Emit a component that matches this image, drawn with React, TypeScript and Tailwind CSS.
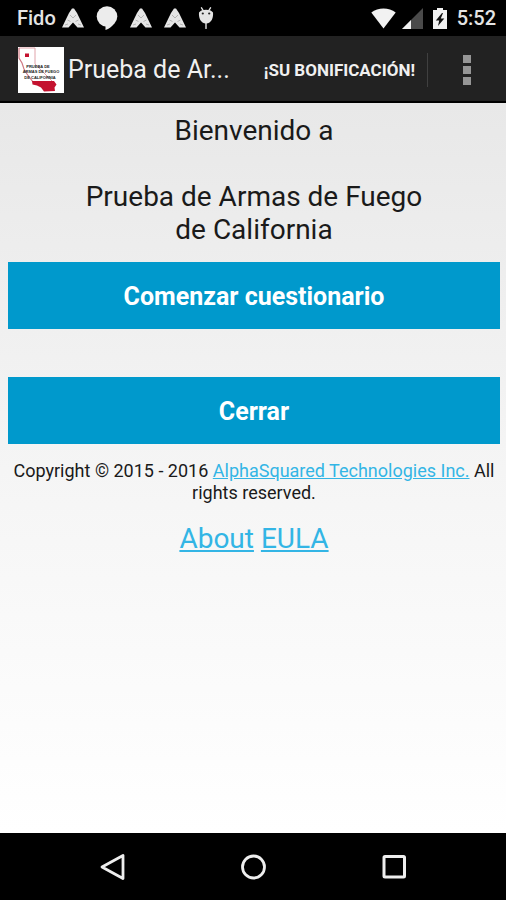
import React from "react";

interface IconProps {
  className?: string;
}

const TentIcon: React.FC<IconProps> = ({ className = "" }) => (
  <svg viewBox="0 0 22 20" className={className} aria-hidden="true">
    <path d="M10 0.500h2L15 5l7 14.500h-6.500L11 14.500 6.500 19.500H0L7 5z" fill="#e6e6e6" />
    <path
      d="M8 7l3 3 3-3M5.500 12l3 1.500M16.500 12l-3 1.500M3 17l3-1M19 17l-3-1"
      stroke="#a8a8a8"
      strokeWidth="0.800"
      fill="none"
    />
  </svg>
);

const BubbleIcon: React.FC<IconProps> = ({ className = "" }) => (
  <svg viewBox="0 0 22 24" className={className} aria-hidden="true">
    <circle cx="11" cy="10.500" r="10.300" fill="#ececec" />
    <path d="M9.500 19v5c3.500-1 6.500-3.500 8.500-6.500z" fill="#ececec" />
  </svg>
);

const DroidIcon: React.FC<IconProps> = ({ className = "" }) => (
  <svg viewBox="0 0 16 22" className={className} aria-hidden="true">
    <path
      d="M3.500 0.800l2 3.200M12.500 0.800l-2 3.200M8 15v6.500"
      stroke="#e4e4e4"
      strokeWidth="1.400"
      strokeLinecap="round"
    />
    <path
      d="M1 5.500C2.500 3.500 5 2.800 8 2.800s5.500.7 7 2.700c.5 5-1.500 11-7 11S.5 10.500 1 5.500z"
      fill="#e4e4e4"
    />
    <circle cx="4.800" cy="6.500" r="1.100" fill="#222" />
    <circle cx="11.200" cy="6.500" r="1.100" fill="#222" />
  </svg>
);

const WifiIcon: React.FC<IconProps> = ({ className = "" }) => (
  <svg viewBox="0 0 25 21" className={className} aria-hidden="true">
    <path d="M0.300 4.500C7 -1 18 -1 24.700 4.500L12.500 20.500z" fill="#f2f2f2" />
  </svg>
);

const SignalIcon: React.FC<IconProps> = ({ className = "" }) => (
  <svg viewBox="0 0 21 21" className={className} aria-hidden="true">
    <path d="M21 0v21H0z" fill="#4a4a4a" />
    <path d="M9 12v9H0z" fill="#f2f2f2" />
  </svg>
);

const BatteryIcon: React.FC<IconProps> = ({ className = "" }) => (
  <svg viewBox="0 0 14 21" className={className} aria-hidden="true">
    <path d="M4 0h6v2h4v19H0V2h4z" fill="#f2f2f2" />
    <path d="M9 5L2.800 12.500h3.400L5 18l6.300-7.500H7.800L10 5z" fill="#111" />
  </svg>
);

const AppLogo: React.FC<IconProps> = ({ className = "" }) => (
  <svg viewBox="0 0 46 46" className={className} role="img" aria-label="Logo">
    <rect width="46" height="46" fill="#fff" />
    <path
      d="M1 1h16v16l17 17"
      fill="none"
      stroke="#e0a3aa"
      strokeWidth="1"
    />
    <path
      d="M1 1v10l3 5 2 6 3 5 3 4 3 4"
      fill="none"
      stroke="#cf7782"
      strokeWidth="1.200"
    />
    <path
      d="M14 34h22l2.500 3.500-2 3 .5 3.500-11 .5-3-4-4-2-4.500-1z"
      fill="#c4122f"
    />
    <rect x="7" y="6.500" width="4" height="3.500" fill="#c4122f" />
    <g
      fontFamily="Liberation Sans, sans-serif"
      fontWeight="700"
      fill="#222"
      textAnchor="middle"
    >
      <text x="20" y="20.500" fontSize="4">
        PRUEBA DE
      </text>
      <text x="23" y="26" fontSize="4">
        ARMAS DE FUEGO
      </text>
      <text x="22" y="31.500" fontSize="4">
        DE CALIFORNIA
      </text>
    </g>
  </svg>
);

const StatusBar: React.FC = () => (
  <div className="flex h-9 items-center justify-between bg-black pl-[17px] pr-2.5 text-[#e4e4e4]">
    <div className="flex items-center">
      <span className="mr-1.5 text-xl font-medium leading-6">Fido</span>
      <TentIcon className="mr-3 h-5 w-[22px]" />
      <BubbleIcon className="mr-3 h-6 w-[22px]" />
      <TentIcon className="mr-3 h-5 w-[22px]" />
      <TentIcon className="mr-3 h-5 w-[22px]" />
      <DroidIcon className="h-[22px] w-4" />
    </div>
    <div className="flex items-center">
      <WifiIcon className="mr-1.5 h-[21px] w-[25px]" />
      <SignalIcon className="mr-2.5 h-[21px] w-[21px]" />
      <BatteryIcon className="mr-2.5 h-[21px] w-3.5" />
      <span className="text-xl font-medium leading-6">5:52</span>
    </div>
  </div>
);

const ActionBar: React.FC = () => (
  <header className="flex h-[67px] items-center border-b-2 border-black bg-[#222] pl-[18px] pt-0.5 text-[#f0f0f0]">
    <AppLogo className="h-[46px] w-[46px] shrink-0" />
    <h1 className="ml-1 min-w-0 flex-1 truncate text-[25px] leading-8">
      Prueba de Ar...
    </h1>
    <button type="button" className="px-3 text-[17px] font-bold leading-8">
      ¡SU BONIFICACIÓN!
    </button>
    <div className="h-[34px] w-px bg-[#404040]" />
    <button
      type="button"
      aria-label="Más opciones"
      className="flex w-[78px] flex-col items-center gap-[3px]"
    >
      <span className="h-2 w-2 bg-[#969696]" />
      <span className="h-2 w-2 bg-[#969696]" />
      <span className="h-2 w-2 bg-[#969696]" />
    </button>
  </header>
);

interface MenuButtonProps {
  label: string;
}

const MenuButton: React.FC<MenuButtonProps> = ({ label }) => (
  <button
    type="button"
    className="h-[67px] w-full bg-[#0099cc] pt-0.5 text-[25px] font-bold leading-8 text-white"
  >
    {label}
  </button>
);

const NavBar: React.FC = () => (
  <nav className="flex h-[67px] items-center justify-center gap-[113px] bg-black">
    <button type="button" aria-label="Atrás">
      <svg viewBox="0 0 28 28" className="h-7 w-7">
        <path
          d="M25 2.500v23L4 14z"
          fill="none"
          stroke="#eee"
          strokeWidth="2.800"
          strokeLinejoin="round"
        />
      </svg>
    </button>
    <button type="button" aria-label="Inicio">
      <svg viewBox="0 0 28 28" className="h-7 w-7">
        <circle
          cx="14.500"
          cy="14"
          r="11"
          fill="none"
          stroke="#eee"
          strokeWidth="2.800"
        />
      </svg>
    </button>
    <button type="button" aria-label="Recientes">
      <svg viewBox="0 0 28 28" className="h-7 w-7">
        <rect
          x="4"
          y="3.500"
          width="20.500"
          height="20.500"
          rx="1"
          fill="none"
          stroke="#eee"
          strokeWidth="3"
        />
      </svg>
    </button>
  </nav>
);

const App: React.FC = () => (
  <div className="flex min-h-screen flex-col font-[Roboto,sans-serif]">
    <StatusBar />
    <ActionBar />
    <main className="flex flex-1 flex-col bg-linear-to-b from-[#e8e8e8] via-[#f5f5f5] to-white pl-2 pr-1.5 pt-[11px] text-center text-[#1a1a1a]">
      <p className="text-[28px] leading-[33px]">Bienvenido a</p>
      <h2 className="mt-[33px] text-[28px] leading-[33px]">
        Prueba de Armas de Fuego
        <br />
        de California
      </h2>
      <div className="mt-4 flex flex-col gap-12">
        <MenuButton label="Comenzar cuestionario" />
        <MenuButton label="Cerrar" />
      </div>
      <p className="mt-4 text-lg leading-[22px]">
        Copyright © 2015 - 2016{" "}
        <a href="#company" className="text-[#33b5e5] underline">
          AlphaSquared Technologies Inc.
        </a>{" "}
        All rights reserved.
      </p>
      <p className="mt-[18px] text-[28px] leading-[33px] text-[#33b5e5]">
        <a href="#about" className="underline">
          About
        </a>{" "}
        <a href="#eula" className="underline">
          EULA
        </a>
      </p>
    </main>
    <NavBar />
  </div>
);

export default App;
